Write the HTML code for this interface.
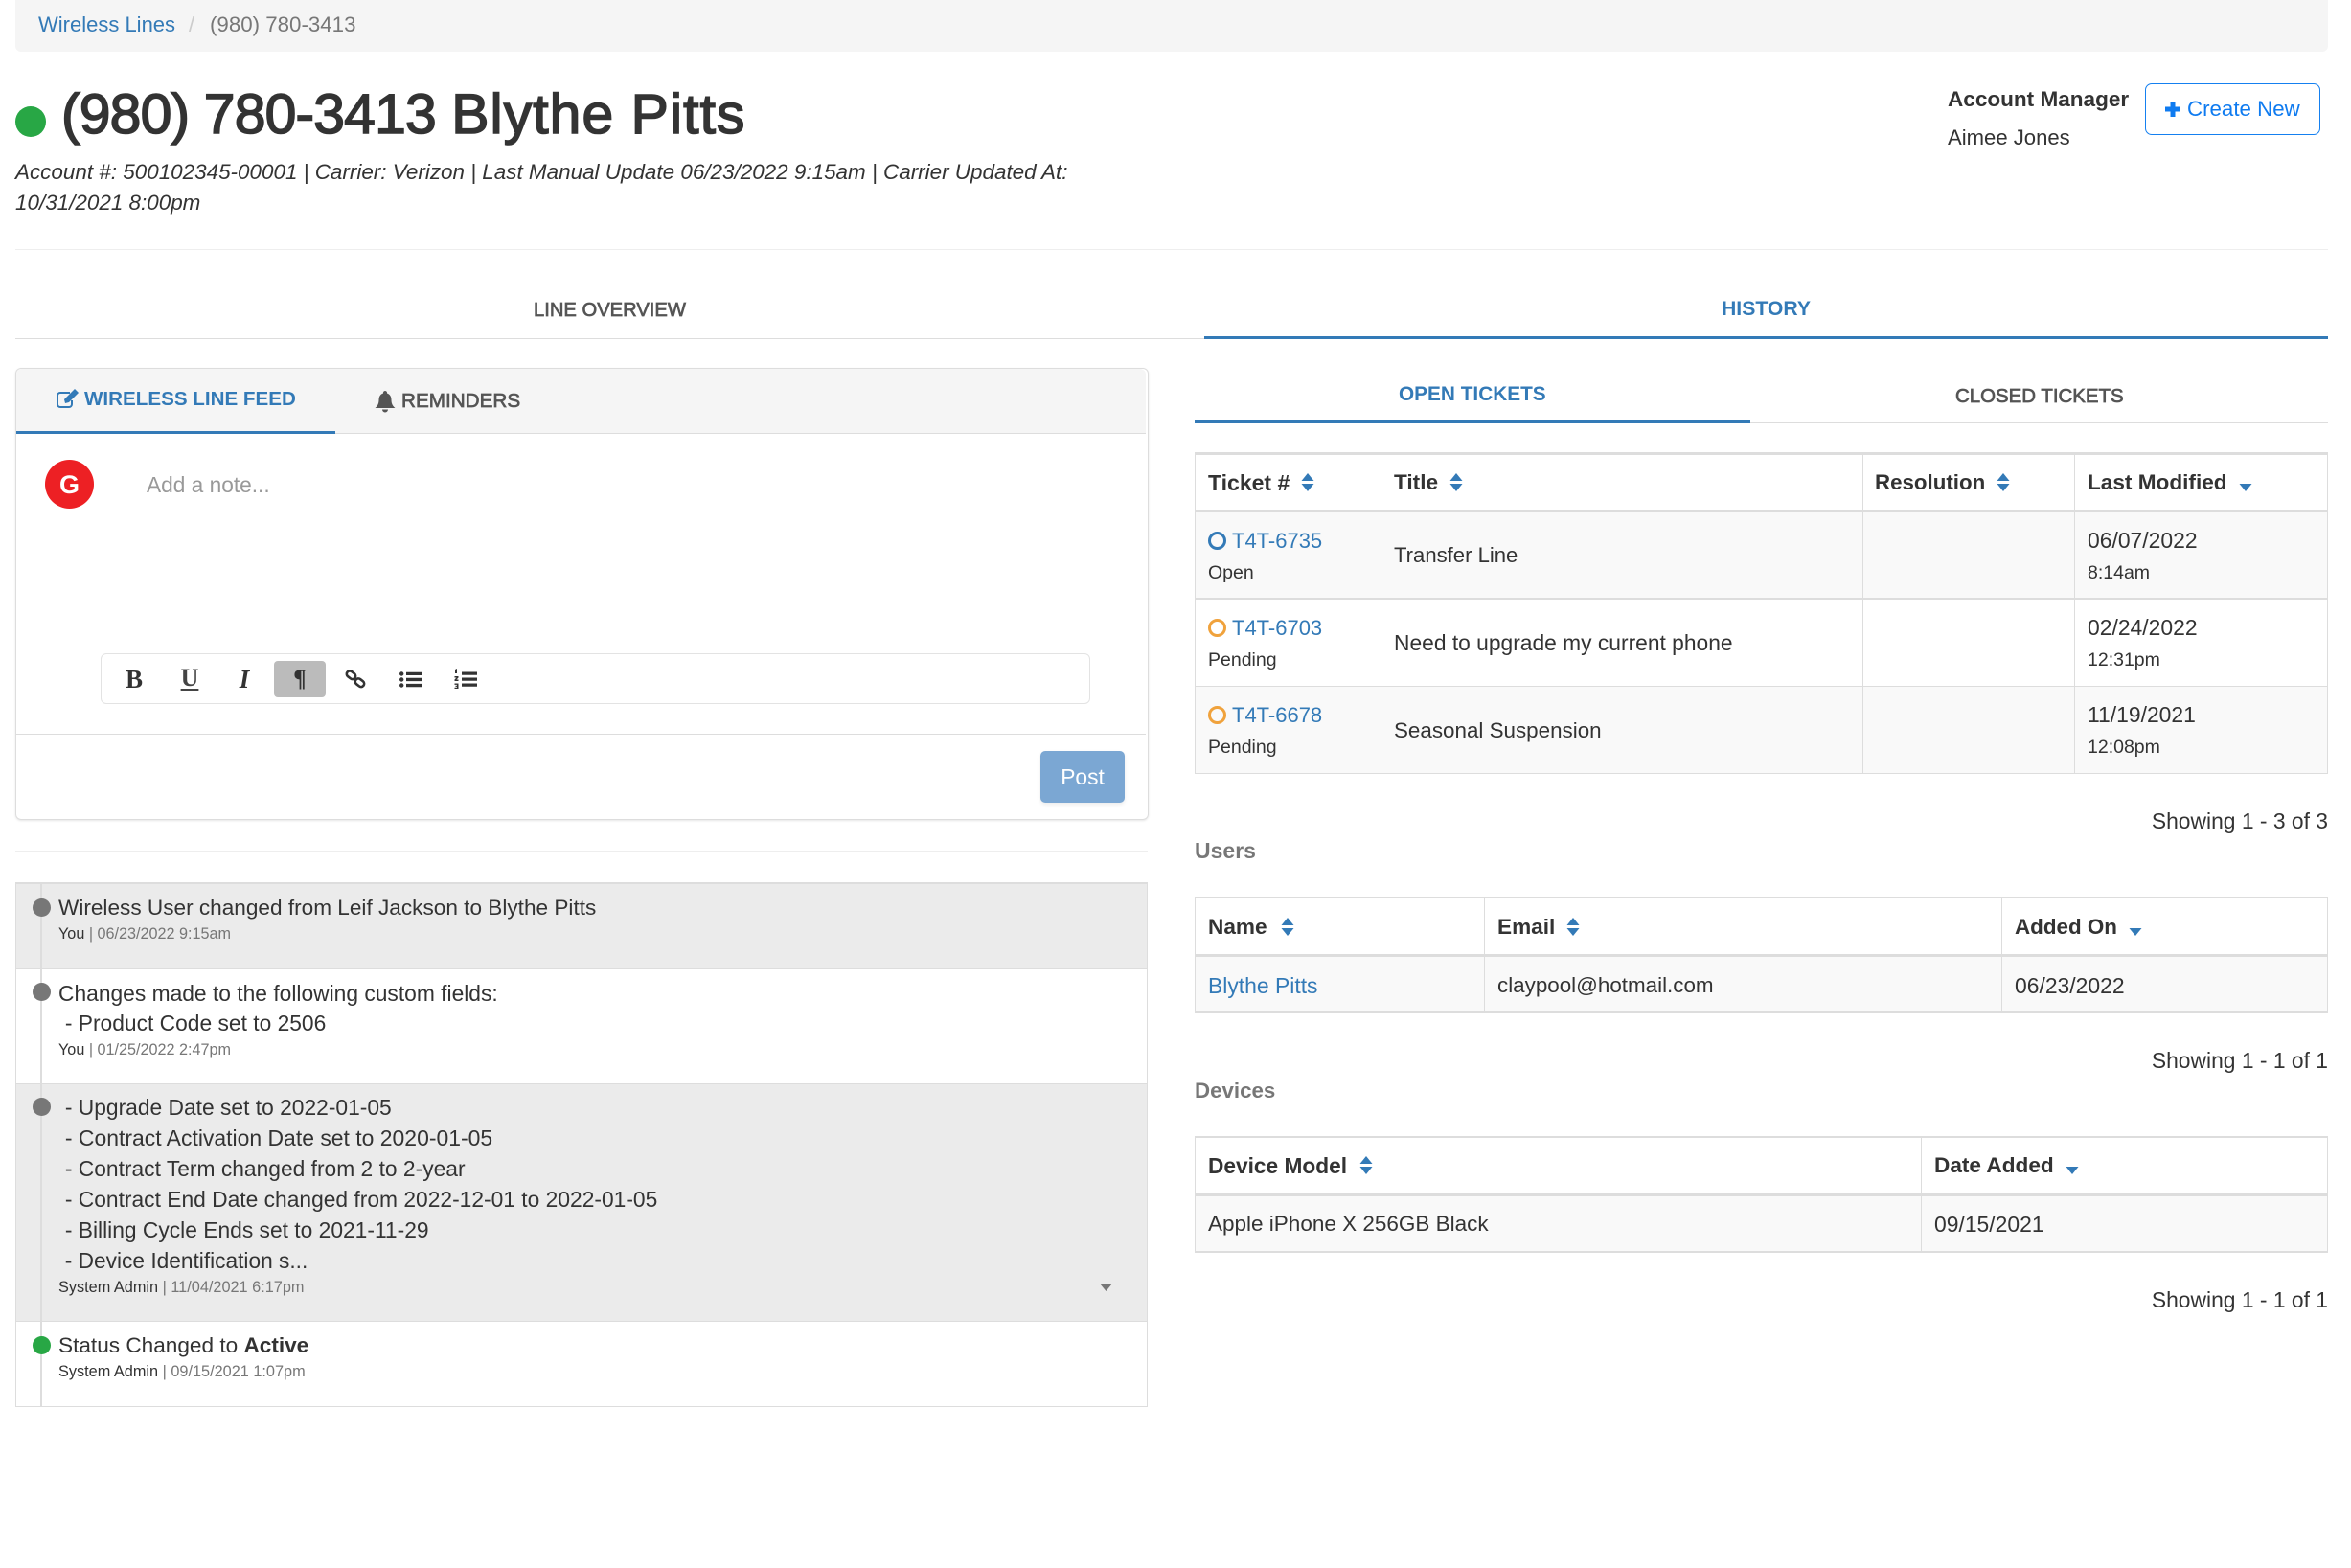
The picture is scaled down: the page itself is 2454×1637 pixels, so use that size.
<!DOCTYPE html>
<html><head><meta charset="utf-8"><style>
html,body{margin:0;padding:0;background:#fff}
body{width:2454px;height:1637px;position:relative;overflow:hidden;font-family:"Liberation Sans",sans-serif;font-size:22.8px;color:#333}
.a{position:absolute;white-space:nowrap;line-height:30px}
.l{position:absolute;background:#ddd}
.b{font-weight:700}
.blue{color:#337ab7}
.s{font-size:16.2px;color:#777}.s i{font-style:normal;color:#333}
.sm{font-size:19.5px}
svg{position:absolute;overflow:visible}
.d{position:absolute;border-radius:50%}
.h{font-weight:700;color:#333;font-size:22.6px}
</style></head><body>
<div style="position:absolute;left:16px;top:0;width:2414px;height:54px;background:#f5f5f5;border-radius:0 0 6px 6px"></div>
<div class="a blue" style="left:40px;top:11px;font-size:22px">Wireless Lines</div>
<div class="a" style="left:197px;top:11px;color:#ccc;font-size:22px">/</div>
<div class="a" style="left:219px;top:11px;color:#777;font-size:22.3px">(980) 780-3413</div>

<div class="d" style="left:16px;top:111px;width:32px;height:32px;background:#28a745"></div>
<div class="a" style="left:64px;top:85px;line-height:70px;font-size:58.8px;color:#333;-webkit-text-stroke:1.600px #333"><span style="letter-spacing:-.8px">(980) 780-3413</span> <span style="letter-spacing:1.1px">Blythe Pitts</span></div>
<div class="a" style="left:16px;top:165px;font-style:italic;font-size:22.45px">Account #: 500102345-00001 | Carrier: Verizon | Last Manual Update 06/23/2022 9:15am | Carrier Updated At:</div>
<div class="a" style="left:16px;top:197px;font-style:italic;font-size:22.45px">10/31/2021 8:00pm</div>

<div class="a b" style="left:2033px;top:89px;font-size:22.55px">Account Manager</div>
<div class="a" style="left:2033px;top:129px;font-size:22.1px">Aimee Jones</div>
<div style="position:absolute;left:2239px;top:87px;width:181px;height:52px;border:1.500px solid #1580f0;border-radius:7px"></div>
<svg style="left:2259px;top:105px" width="18" height="18"><path d="M9 1v16M1 9h16" stroke="#0f7bf0" stroke-width="5"/></svg>
<div class="a" style="left:2283px;top:99px;color:#0f7bf0;font-size:22.3px">Create New</div>

<div class="l" style="left:16px;top:260px;width:2414px;height:1px;background:#eee"></div>
<div class="a" style="left:557px;top:309px;font-size:20.2px;color:#555;-webkit-text-stroke:.7px #555">LINE OVERVIEW</div>
<div class="a b blue" style="left:1797px;top:308px;font-size:21.2px">HISTORY</div>
<div class="l" style="left:16px;top:353px;width:1241px;height:1px"></div>
<div class="l" style="left:1257px;top:351px;width:1173px;height:3px;background:#337ab7"></div>

<div style="position:absolute;left:16px;top:384px;width:1181px;height:470px;border:1px solid #ddd;border-radius:6px;box-shadow:0 1px 2px rgba(0,0,0,.1)"></div>
<div style="position:absolute;left:17px;top:385px;width:1179px;height:67px;background:#f5f5f5;border-radius:6px 6px 0 0;border-bottom:1px solid #ddd"></div>
<div class="l" style="left:17px;top:450px;width:333px;height:3px;background:#337ab7"></div>
<svg style="left:58px;top:406px" width="24" height="20" viewBox="0 0 24 20"><path d="M15 4H5a3 3 0 0 0-3 3v9a3 3 0 0 0 3 3h9a3 3 0 0 0 3-3v-4" fill="none" stroke="#337ab7" stroke-width="2"/><path d="M9 11l1 4 4-1L24 4l-4-4z" fill="#337ab7"/></svg>
<div class="a b blue" style="left:88px;top:402px;font-size:20.6px">WIRELESS LINE FEED</div>
<svg style="left:391px;top:408px" width="22" height="23" viewBox="0 0 22 23"><path d="M11 0a2 2 0 0 1 2 2.500c3 1 4.500 3.500 4.500 7 0 4 1.500 6.500 4 8.500H.5c2.500-2 4-4.500 4-8.500 0-3.500 1.500-6 4.500-7A2 2 0 0 1 11 0zM8 19.500h6a3 3 0 0 1-6 0z" fill="#555"/></svg>
<div class="a" style="left:419px;top:404px;font-size:20.7px;color:#555;-webkit-text-stroke:.7px #555">REMINDERS</div>
<div class="d" style="left:47px;top:480px;width:51px;height:51px;background:#ed2024"></div>
<div class="a b" style="left:47px;top:491px;width:51px;text-align:center;color:#fff;font-size:27px">G</div>
<div class="a" style="left:153px;top:491px;color:#999;font-size:22.7px">Add a note...</div>

<div style="position:absolute;left:105px;top:682px;width:1031px;height:51px;border:1px solid #e3e3e3;border-radius:6px"></div>
<div style="position:absolute;left:286px;top:690px;width:54px;height:38px;background:#bbb;border-radius:4px"></div>
<div class="a b" style="left:125px;top:694px;width:30px;text-align:center;font-family:'Liberation Serif',serif;font-size:27px">B</div>
<div class="a" style="left:183px;top:693px;width:30px;text-align:center;font-family:'Liberation Serif',serif;font-size:26px;font-weight:700;color:#444;text-decoration:underline;text-underline-offset:3px;text-decoration-thickness:1.500px">U</div>
<div class="a" style="left:240px;top:694px;width:30px;text-align:center;font-family:'Liberation Serif',serif;font-style:italic;font-weight:700;font-size:27px">I</div>
<div class="a b" style="left:298px;top:694px;width:30px;text-align:center;font-family:'Liberation Serif',serif;font-size:25px">¶</div>
<svg style="left:360px;top:699px" width="22" height="20" viewBox="0 0 22 20" fill="none" stroke="#333" stroke-width="2.600"><rect x="1.500" y="2.500" width="10" height="6.500" rx="3.200" transform="rotate(38 6.500 5.700)"/><rect x="10.500" y="10.500" width="10" height="6.500" rx="3.200" transform="rotate(38 15.500 13.700)"/></svg>
<svg style="left:417px;top:701px" width="23" height="17" viewBox="0 0 23 17" fill="#333"><circle cx="2.200" cy="2.500" r="2.200"/><circle cx="2.200" cy="8.500" r="2.200"/><circle cx="2.200" cy="14.500" r="2.200"/><path d="M7 .7h16v3.300H7zM7 6.800h16v3.300H7zM7 12.900h16v3.300H7z"/></svg>
<svg style="left:474px;top:698px" width="24" height="22" viewBox="0 0 24 22" fill="#333"><path d="M8 3.500h16v3.300H8zM8 9.500h16v3.300H8zM8 15.500h16v3.300H8z"/><path d="M1 1l2-1v5H1zM.5 8h4v1.500l-2 2h2V13h-4v-1.500l2-2h-2zM.5 15.500h4V21h-4v-1.300h2.500v-.8H1.500v-1.200H3v-.8H.5z"/></svg>

<div class="l" style="left:17px;top:766px;width:1179px;height:1px"></div>
<div style="position:absolute;left:1086px;top:784px;width:88px;height:54px;background:#7ba7d3;border-radius:5px;color:#fff;text-align:center;line-height:54px;box-shadow:0 2px 4px rgba(0,0,0,.08)">Post</div>

<div class="l" style="left:16px;top:888px;width:1182px;height:1px;background:#eee"></div>

<div style="position:absolute;left:16px;top:922px;width:1182px;height:89px;background:#ebebeb"></div>
<div style="position:absolute;left:16px;top:1131px;width:1182px;height:248px;background:#ebebeb"></div>
<div class="l" style="left:16px;top:921px;width:1182px;height:2px"></div>
<div class="l" style="left:16px;top:1011px;width:1182px;height:1px"></div>
<div class="l" style="left:16px;top:1131px;width:1182px;height:1px"></div>
<div class="l" style="left:16px;top:1379px;width:1182px;height:1px"></div>
<div class="l" style="left:16px;top:1468px;width:1182px;height:1px"></div>
<div class="l" style="left:16px;top:921px;width:1px;height:548px"></div>
<div class="l" style="left:1197px;top:921px;width:1px;height:548px"></div>
<div class="l" style="left:42px;top:923px;width:2px;height:545px"></div>
<div class="d" style="left:34px;top:938px;width:19px;height:19px;background:#777"></div>
<div class="d" style="left:34px;top:1026px;width:19px;height:19px;background:#777"></div>
<div class="d" style="left:34px;top:1146px;width:19px;height:19px;background:#777"></div>
<div class="d" style="left:34px;top:1395px;width:19px;height:19px;background:#28a745"></div>

<div class="a" style="left:61px;top:933px;font-size:22.6px">Wireless User changed from Leif Jackson to Blythe Pitts</div>
<div class="a s" style="left:61px;top:960px"><i>You</i> | 06/23/2022 9:15am</div>
<div class="a" style="left:61px;top:1022px">Changes made to the following custom fields:</div>
<div class="a" style="left:61.500px;top:1053px">&nbsp;- Product Code set to 2506</div>
<div class="a s" style="left:61px;top:1081px"><i>You</i> | 01/25/2022 2:47pm</div>
<div class="a" style="left:61.500px;top:1141px">&nbsp;- Upgrade Date set to 2022-01-05</div>
<div class="a" style="left:61.500px;top:1173px;font-size:22.95px">&nbsp;- Contract Activation Date set to 2020-01-05</div>
<div class="a" style="left:61.500px;top:1205px">&nbsp;- Contract Term changed from 2 to 2-year</div>
<div class="a" style="left:61.500px;top:1237px">&nbsp;- Contract End Date changed from 2022-12-01 to 2022-01-05</div>
<div class="a" style="left:61.500px;top:1269px">&nbsp;- Billing Cycle Ends set to 2021-11-29</div>
<div class="a" style="left:61.500px;top:1301px;font-size:22.7px">&nbsp;- Device Identification s...</div>
<div class="a s" style="left:61px;top:1329px;font-size:16.3px"><i>System Admin</i> | 11/04/2021 6:17pm</div>
<svg style="left:1148px;top:1340px" width="13" height="8"><path d="M0 0h13L6.500 8z" fill="#777"/></svg>
<div class="a" style="left:61px;top:1390px;font-size:22.6px">Status Changed to <b>Active</b></div>
<div class="a s" style="left:61px;top:1417px;font-size:16.3px"><i>System Admin</i> | 09/15/2021 1:07pm</div>

<div class="a b blue" style="left:1460px;top:397px;font-size:20.8px">OPEN TICKETS</div>
<div class="a" style="left:2041px;top:399px;font-size:20.45px;color:#555;-webkit-text-stroke:.7px #555">CLOSED TICKETS</div>
<div class="l" style="left:1827px;top:441px;width:603px;height:1px"></div>
<div class="l" style="left:1247px;top:439px;width:580px;height:3px;background:#337ab7"></div>

<!-- Tickets table -->
<div style="position:absolute;left:1248px;top:535px;width:1182px;height:89px;background:#f9f9f9"></div>
<div style="position:absolute;left:1248px;top:717px;width:1182px;height:91px;background:#f9f9f9"></div>
<div class="l" style="left:1247px;top:472px;width:1183px;height:3px"></div>
<div class="l" style="left:1247px;top:532px;width:1183px;height:3px"></div>
<div class="l" style="left:1247px;top:624px;width:1183px;height:2px"></div>
<div class="l" style="left:1247px;top:716px;width:1183px;height:1px"></div>
<div class="l" style="left:1247px;top:807px;width:1183px;height:1px"></div>
<div class="l" style="left:1247px;top:472px;width:1px;height:336px"></div>
<div class="l" style="left:1441px;top:472px;width:1px;height:336px"></div>
<div class="l" style="left:1944px;top:472px;width:1px;height:336px"></div>
<div class="l" style="left:2165px;top:472px;width:1px;height:336px"></div>
<div class="l" style="left:2429px;top:472px;width:1px;height:336px"></div>
<div class="a h" style="left:1261px;top:489px;font-size:23px">Ticket #</div>
<div class="a h" style="left:1455px;top:489px">Title</div>
<div class="a h" style="left:1957px;top:489px;font-size:22.3px">Resolution</div>
<div class="a h" style="left:2179px;top:489px">Last Modified</div>
<svg style="left:1358px;top:494px" width="14" height="19"><path d="M7 0l6.500 8H.5zM.5 11h13L7 19z" fill="#337ab7"/></svg>
<svg style="left:1513px;top:494px" width="14" height="19"><path d="M7 0l6.500 8H.5zM.5 11h13L7 19z" fill="#337ab7"/></svg>
<svg style="left:2084px;top:494px" width="14" height="19"><path d="M7 0l6.500 8H.5zM.5 11h13L7 19z" fill="#337ab7"/></svg>
<svg style="left:2337px;top:505px" width="14" height="8"><path d="M.5 0h13L7 8z" fill="#337ab7"/></svg>

<div class="d" style="left:1261px;top:555px;width:19px;height:19px;box-sizing:border-box;border:3px solid #337ab7"></div>
<div class="a blue" style="left:1286px;top:550px;font-size:22px">T4T-6735</div>
<div class="a sm" style="left:1261px;top:583px">Open</div>
<div class="a" style="left:1455px;top:565px;font-size:22.1px">Transfer Line</div>
<div class="a" style="left:2179px;top:549px;font-size:22.9px">06/07/2022</div>
<div class="a sm" style="left:2179px;top:583px">8:14am</div>

<div class="d" style="left:1261px;top:646px;width:19px;height:19px;box-sizing:border-box;border:3px solid #f0a23c"></div>
<div class="a blue" style="left:1286px;top:641px;font-size:22px">T4T-6703</div>
<div class="a sm" style="left:1261px;top:674px">Pending</div>
<div class="a" style="left:1455px;top:656px">Need to upgrade my current phone</div>
<div class="a" style="left:2179px;top:640px;font-size:22.9px">02/24/2022</div>
<div class="a sm" style="left:2179px;top:674px">12:31pm</div>

<div class="d" style="left:1261px;top:737px;width:19px;height:19px;box-sizing:border-box;border:3px solid #f0a23c"></div>
<div class="a blue" style="left:1286px;top:732px;font-size:22px">T4T-6678</div>
<div class="a sm" style="left:1261px;top:765px">Pending</div>
<div class="a" style="left:1455px;top:748px;font-size:22.4px">Seasonal Suspension</div>
<div class="a" style="left:2179px;top:731px;font-size:22.9px">11/19/2021</div>
<div class="a sm" style="left:2179px;top:765px">12:08pm</div>

<div class="a" style="right:24px;top:842px;font-size:22.85px">Showing 1 - 3 of 3</div>
<div class="a b" style="left:1247px;top:873px;color:#777;font-size:23px">Users</div>

<!-- Users table -->
<div style="position:absolute;left:1248px;top:999px;width:1182px;height:57px;background:#f9f9f9"></div>
<div class="l" style="left:1247px;top:936px;width:1183px;height:2px"></div>
<div class="l" style="left:1247px;top:996px;width:1183px;height:3px"></div>
<div class="l" style="left:1247px;top:1056px;width:1183px;height:2px"></div>
<div class="l" style="left:1247px;top:936px;width:1px;height:122px"></div>
<div class="l" style="left:1549px;top:936px;width:1px;height:122px"></div>
<div class="l" style="left:2089px;top:936px;width:1px;height:122px"></div>
<div class="l" style="left:2429px;top:936px;width:1px;height:122px"></div>
<div class="a h" style="left:1261px;top:953px">Name</div>
<div class="a h" style="left:1563px;top:953px">Email</div>
<div class="a h" style="left:2103px;top:953px;font-size:22.4px">Added On</div>
<svg style="left:1337px;top:958px" width="14" height="19"><path d="M7 0l6.500 8H.5zM.5 11h13L7 19z" fill="#337ab7"/></svg>
<svg style="left:1635px;top:958px" width="14" height="19"><path d="M7 0l6.500 8H.5zM.5 11h13L7 19z" fill="#337ab7"/></svg>
<svg style="left:2222px;top:969px" width="14" height="8"><path d="M.5 0h13L7 8z" fill="#337ab7"/></svg>
<div class="a blue" style="left:1261px;top:1014px;font-size:22.9px">Blythe Pitts</div>
<div class="a" style="left:1563px;top:1014px;font-size:22.4px">claypool@hotmail.com</div>
<div class="a" style="left:2103px;top:1014px;font-size:22.9px">06/23/2022</div>

<div class="a" style="right:24px;top:1092px;font-size:22.85px">Showing 1 - 1 of 1</div>
<div class="a b" style="left:1247px;top:1124px;color:#777;font-size:22.3px">Devices</div>

<!-- Devices table -->
<div style="position:absolute;left:1248px;top:1249px;width:1182px;height:57px;background:#f9f9f9"></div>
<div class="l" style="left:1247px;top:1186px;width:1183px;height:2px"></div>
<div class="l" style="left:1247px;top:1246px;width:1183px;height:3px"></div>
<div class="l" style="left:1247px;top:1306px;width:1183px;height:2px"></div>
<div class="l" style="left:1247px;top:1186px;width:1px;height:122px"></div>
<div class="l" style="left:2005px;top:1186px;width:1px;height:122px"></div>
<div class="l" style="left:2429px;top:1186px;width:1px;height:122px"></div>
<div class="a h" style="left:1261px;top:1202px;font-size:22.7px">Device Model</div>
<div class="a h" style="left:2019px;top:1202px">Date Added</div>
<svg style="left:1419px;top:1207px" width="14" height="19"><path d="M7 0l6.500 8H.5zM.5 11h13L7 19z" fill="#337ab7"/></svg>
<svg style="left:2156px;top:1218px" width="14" height="8"><path d="M.5 0h13L7 8z" fill="#337ab7"/></svg>
<div class="a" style="left:1261px;top:1263px;font-size:22.5px">Apple iPhone X 256GB Black</div>
<div class="a" style="left:2019px;top:1263px;font-size:22.9px">09/15/2021</div>
<div class="a" style="right:24px;top:1342px;font-size:22.85px">Showing 1 - 1 of 1</div>
</body></html>
